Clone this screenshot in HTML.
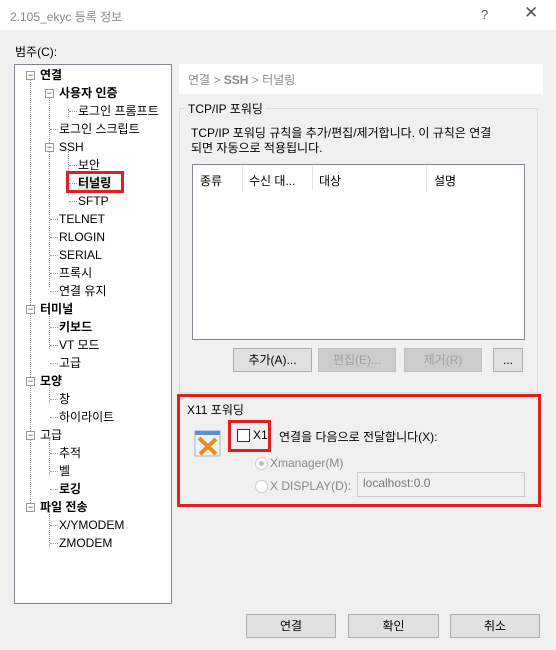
<!DOCTYPE html><html><head><meta charset="utf-8"><style>
*{margin:0;padding:0;box-sizing:border-box}
body{width:556px;height:650px;background:#f0f0f0;font-family:"Liberation Sans","Noto Sans CJK KR",sans-serif;font-size:12px;color:#000;position:relative;overflow:hidden}
.a{position:absolute;white-space:nowrap}
.tb{left:0;top:0;width:556px;height:30px;background:#fff}
.tree{left:14px;top:64px;width:158px;height:540px;background:#fff;border:1px solid #828790}
.it{position:absolute;line-height:16px}
.b{font-weight:bold}
.box{position:absolute;width:9px;height:9px;border:1px solid #999;background:#fff;font-size:9px;line-height:6px;text-align:center;color:#333}
.vl{position:absolute;border-left:1px dotted #999}
.hl{position:absolute;border-top:1px dotted #999;width:8px}
.btn{position:absolute;height:24px;border:1px solid #adadad;background:#e1e1e1;text-align:center;line-height:22px}
.dis{color:#a0a0a0;background:#ccc;border-color:#bfbfbf}
.red{position:absolute;border:3px solid #e02020}
</style></head><body>
<div class="a tb"></div>
<div class="a" style="left:10px;top:8px;color:#888;font-size:12px">2.105_ekyc 등록 정보</div>
<div class="a" style="left:481px;top:7px;color:#555;font-size:13px">?</div>
<div class="a" style="left:524px;top:3px;color:#555;font-size:17px">✕</div>
<div class="a" style="left:15px;top:43px">범주(C):</div>
<div class="a tree">
<div class="vl" style="left:15px;top:14px;height:430px"></div>
<div class="vl" style="left:34px;top:30px;height:192px"></div>
<div class="vl" style="left:53px;top:44px;height:8px"></div>
<div class="vl" style="left:53px;top:86px;height:44px"></div>
<div class="vl" style="left:34px;top:248px;height:36px"></div>
<div class="vl" style="left:34px;top:320px;height:18px"></div>
<div class="vl" style="left:34px;top:374px;height:36px"></div>
<div class="vl" style="left:34px;top:446px;height:36px"></div>
<div class="box" style="left:11px;top:6px">−</div><div class="it b" style="left:25px;top:2px">연결</div>
<div class="box" style="left:30px;top:24px">−</div><div class="it b" style="left:44px;top:20px">사용자 인증</div>
<div class="hl" style="left:54px;top:46px"></div><div class="it" style="left:63px;top:38px">로그인 프롬프트</div>
<div class="hl" style="left:35px;top:64px"></div><div class="it" style="left:44px;top:56px">로그인 스크립트</div>
<div class="box" style="left:30px;top:78px">−</div><div class="it" style="left:44px;top:74px">SSH</div>
<div class="hl" style="left:54px;top:100px"></div><div class="it" style="left:63px;top:92px">보안</div>
<div class="hl" style="left:54px;top:118px"></div><div class="it b" style="left:63px;top:110px;background:#e8e8e8">터널링</div>
<div class="hl" style="left:54px;top:136px"></div><div class="it" style="left:63px;top:128px">SFTP</div>
<div class="hl" style="left:35px;top:154px"></div><div class="it" style="left:44px;top:146px">TELNET</div>
<div class="hl" style="left:35px;top:172px"></div><div class="it" style="left:44px;top:164px">RLOGIN</div>
<div class="hl" style="left:35px;top:190px"></div><div class="it" style="left:44px;top:182px">SERIAL</div>
<div class="hl" style="left:35px;top:208px"></div><div class="it" style="left:44px;top:200px">프록시</div>
<div class="hl" style="left:35px;top:226px"></div><div class="it" style="left:44px;top:218px">연결 유지</div>
<div class="box" style="left:11px;top:240px">−</div><div class="it b" style="left:25px;top:236px">터미널</div>
<div class="hl" style="left:35px;top:262px"></div><div class="it b" style="left:44px;top:254px">키보드</div>
<div class="hl" style="left:35px;top:280px"></div><div class="it" style="left:44px;top:272px">VT 모드</div>
<div class="hl" style="left:35px;top:298px"></div><div class="it" style="left:44px;top:290px">고급</div>
<div class="box" style="left:11px;top:312px">−</div><div class="it b" style="left:25px;top:308px">모양</div>
<div class="hl" style="left:35px;top:334px"></div><div class="it" style="left:44px;top:326px">창</div>
<div class="hl" style="left:35px;top:352px"></div><div class="it" style="left:44px;top:344px">하이라이트</div>
<div class="box" style="left:11px;top:366px">−</div><div class="it" style="left:25px;top:362px">고급</div>
<div class="hl" style="left:35px;top:388px"></div><div class="it" style="left:44px;top:380px">추적</div>
<div class="hl" style="left:35px;top:406px"></div><div class="it" style="left:44px;top:398px">벨</div>
<div class="hl" style="left:35px;top:424px"></div><div class="it b" style="left:44px;top:416px">로깅</div>
<div class="box" style="left:11px;top:438px">−</div><div class="it b" style="left:25px;top:434px">파일 전송</div>
<div class="hl" style="left:35px;top:460px"></div><div class="it" style="left:44px;top:452px">X/YMODEM</div>
<div class="hl" style="left:35px;top:478px"></div><div class="it" style="left:44px;top:470px">ZMODEM</div>
</div>
<div class="red" style="left:66px;top:171px;width:58px;height:22px"></div>
<div class="a" style="left:179px;top:64px;width:364px;height:30px;background:#fff"></div>
<div class="a" style="left:188px;top:71px;color:#888">연결 &gt; <b>SSH</b> &gt; 터널링</div>
<div class="a" style="left:179px;top:108px;width:359px;height:285px;border:1px solid #dcdcdc"></div>
<div class="a" style="left:185px;top:100px;background:#f0f0f0;padding:0 3px">TCP/IP 포워딩</div>
<div class="a" style="left:191px;top:126px;line-height:15px">TCP/IP 포워딩 규칙을 추가/편집/제거합니다. 이 규칙은 연결<br>되면 자동으로 적용됩니다.</div>
<div class="a" style="left:192px;top:164px;width:333px;height:176px;background:#fff;border:1px solid #828790"></div>
<div class="a" style="left:200px;top:172px">종류</div>
<div class="a" style="left:242px;top:166px;height:24px;border-left:1px solid #e5e5e5"></div>
<div class="a" style="left:249px;top:172px">수신 대...</div>
<div class="a" style="left:312px;top:166px;height:24px;border-left:1px solid #e5e5e5"></div>
<div class="a" style="left:319px;top:172px">대상</div>
<div class="a" style="left:426px;top:166px;height:24px;border-left:1px solid #e5e5e5"></div>
<div class="a" style="left:434px;top:172px">설명</div>
<div class="btn" style="left:233px;top:348px;width:79px">추가(A)...</div>
<div class="btn dis" style="left:318px;top:348px;width:78px">편집(E)...</div>
<div class="btn dis" style="left:404px;top:348px;width:78px">제거(R)</div>
<div class="btn" style="left:493px;top:348px;width:30px">...</div>
<div class="red" style="left:177px;top:394px;width:364px;height:113px"></div>
<div class="a" style="left:187px;top:401px">X11 포워딩</div>
<svg class="a" style="left:192px;top:429px" width="30" height="30" viewBox="0 0 30 30"><rect x="3" y="2" width="25" height="25" fill="#eef4fb" stroke="#9db4cc"/><rect x="3" y="2" width="25" height="4" fill="#5b8fd1"/><path d="M7 9 L24 25 M24 10 L8 25" stroke="#f08a1c" stroke-width="4"/></svg>
<div class="a" style="left:237px;top:429px;width:13px;height:13px;border:1px solid #333;background:#fff"></div>
<div class="a" style="left:253px;top:428px">X1</div>
<div class="red" style="left:228px;top:420px;width:43px;height:32px"></div>
<div class="a" style="left:279px;top:428px">연결을 다음으로 전달합니다(X):</div>
<div class="a" style="left:255px;top:457px;width:13px;height:13px;border-radius:50%;border:1px solid #ccc;background:#fff"><div style="margin:3px;width:5px;height:5px;border-radius:50%;background:#bbb"></div></div>
<div class="a" style="left:270px;top:456px;color:#888">Xmanager(M)</div>
<div class="a" style="left:255px;top:480px;width:13px;height:13px;border-radius:50%;border:1px solid #ccc;background:#fff"></div>
<div class="a" style="left:270px;top:479px;color:#888">X DISPLAY(D):</div>
<div class="a" style="left:357px;top:472px;width:168px;height:25px;border:1px solid #ccc;background:#f0f0f0;color:#777;padding:3px 5px">localhost:0.0</div>
<div class="btn" style="left:246px;top:614px;width:90px">연결</div>
<div class="btn" style="left:348px;top:614px;width:91px">확인</div>
<div class="btn" style="left:450px;top:614px;width:90px">취소</div>
</body></html>
